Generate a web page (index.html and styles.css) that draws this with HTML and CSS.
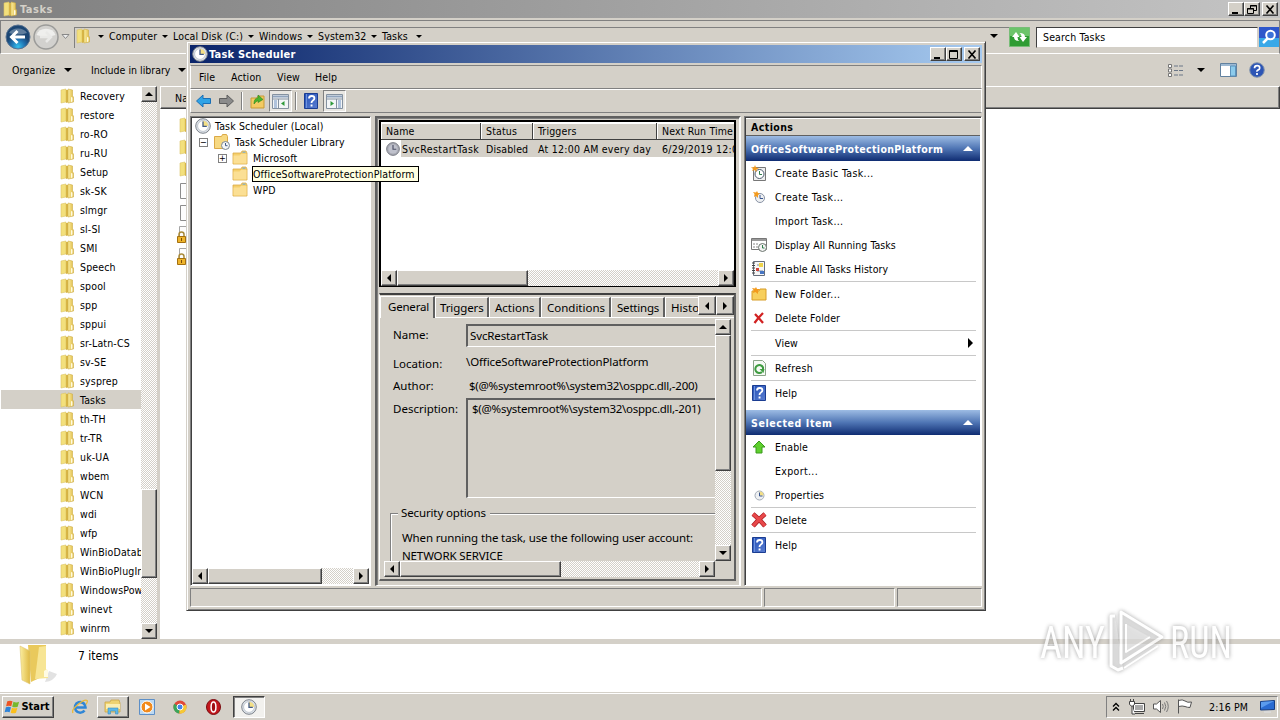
FILE: index.html
```html
<!DOCTYPE html>
<html lang="en">
<head>
    <meta charset="UTF-8">
    <meta name="viewport" content="width=device-width, initial-scale=1.0">
    <title>Task Scheduler</title>
    <link rel="stylesheet" href="styles.css">
</head>
<body>
    <!-- Icon definitions -->
    <svg class="defs" width="0" height="0">
        <defs>
            <linearGradient id="gold" x1="0" x2="1"><stop offset="0" stop-color="#fbeea0"/><stop offset="1" stop-color="#dfb944"/></linearGradient>
            <linearGradient id="helpblue" x1="0" x2="1" y2="1"><stop offset="0" stop-color="#2350b8"/><stop offset="1" stop-color="#5b7ed0"/></linearGradient>
            <radialGradient id="orb" cy="0.9"><stop offset="0" stop-color="#35c0ee"/><stop offset="0.6" stop-color="#1f6fae"/><stop offset="1" stop-color="#1b4673"/></radialGradient>
            <symbol id="folder" viewBox="0 0 16 16">
                <path d="M2 2l5-1v13l-5 1z" fill="#f3e07c" stroke="#dcc467" stroke-width=".6"/>
                <path d="M7 2h3v12l-3 1z" fill="#d8b545"/>
                <path d="M9 1l4.500 1v6l1 1v5l-5.500 1z" fill="url(#gold)" stroke="#cfae48" stroke-width=".6"/>
                <path d="M12 9l1.500.5v4l-1.500.5z" fill="#fffbe0"/>
            </symbol>
            <symbol id="folder-flat" viewBox="0 0 16 16">
                <path d="M1 3h8l1-2h4l1 2v11H1z" fill="#f5cf6c" stroke="#dba947" stroke-width=".8"/>
                <path d="M1.500 5.500h6l1.500-1.500h5.500v9.500h-13z" fill="#fbdf94"/>
                <path d="M10.500 2.200h3" stroke="#6aa9dc"/>
            </symbol>
            <symbol id="clock" viewBox="0 0 16 16">
                <circle cx="8" cy="8" r="7.300" fill="#dfe4ea" stroke="#7d838b"/>
                <circle cx="8" cy="8" r="5.400" fill="#fff" stroke="#aeb6c0" stroke-width=".7"/>
                <path d="M8 8V2.800A5.200 5.200 0 0 1 13.200 8z" fill="#f3df86"/>
                <path d="M8 3.500V8.300h3.800" fill="none" stroke="#425a86" stroke-width="1.300"/>
            </symbol>
            <symbol id="clock-gray" viewBox="0 0 16 16">
                <circle cx="8" cy="8" r="7.300" fill="#a9abb5" stroke="#70727d"/>
                <circle cx="8" cy="8" r="5.200" fill="#bfc1cc"/>
                <path d="M8 3.500V8.300h3.800" fill="none" stroke="#4c4f66" stroke-width="1.300"/>
            </symbol>
            <symbol id="help" viewBox="0 0 14 16">
                <path d="M.5.500h13v15H.5z" fill="url(#helpblue)" stroke="#1b3d92"/>
                <path d="M2.500 1v14" stroke="#6d92dd"/>
                <path d="M5 5.500q0-2.500 2.700-2.500t2.700 2.300q0 1.300-1.500 2.200T7.500 10" fill="none" stroke="#fff" stroke-width="1.800"/>
                <path d="M6.600 11.500h1.900v2H6.600z" fill="#fff"/>
            </symbol>
            <symbol id="arrow" viewBox="0 0 16 14">
                <path d="M1 7l6.500-6v3.500H15v5H7.500V13z" stroke-width="1"/>
            </symbol>
            <symbol id="pane" viewBox="0 0 17 15">
                <path d="M.5.500h16v14H.5z" fill="#f3f5f7" stroke="#8491a0"/>
                <path d="M1 2.500h15" stroke="#8fa3bd" stroke-width="2"/>
                <path d="M1 5h15M6.500 5v9" stroke="#8491a0"/>
                <path d="M2 7h3M2 9h3M2 11h3M2 13h3" stroke="#6c8fc0"/>
                <path d="M12.500 7v5L9 9.500z" fill="#2f9a3a"/>
            </symbol>
            <symbol id="doc" viewBox="0 0 14 16">
                <path d="M1.500.500h9l3 3v12h-12z" fill="#fdfdfd" stroke="#8c8c8c"/>
            </symbol>
            <symbol id="lockdoc" viewBox="0 0 16 18">
                <path d="M3.500.500h12v15h-12z" fill="#fdfdfd" stroke="#a5a5a5"/>
                <path d="M3 11V8.500q0-2.500 2.500-2.500T8 8.500V11" fill="none" stroke="#a88a3a" stroke-width="1.500"/>
                <path d="M1.500 10.500h8v6h-8z" fill="#eeb42c" stroke="#a4700f"/>
                <path d="M5.500 12v3" stroke="#7c4d06"/>
            </symbol>
            <symbol id="flagwin" viewBox="0 0 18 16">
                <path d="M3.500 2q3-1.500 5.500 0L7.700 7.300q-2.600-1.300-5.500 0z" fill="#ee5423"/>
                <path d="M10 2.500q3 1.300 6 0l-1.500 5.200q-3 1.300-5.800 0z" fill="#77b82d"/>
                <path d="M2 8.300q2.700-1.300 5.400 0L6 13.600q-2.600-1.300-5.300 0z" fill="#2e83d8"/>
                <path d="M8.400 8.700q2.900 1.300 5.800 0l-1.500 5.300q-2.900 1.300-5.600 0z" fill="#fbbf1c"/>
            </symbol>
        </defs>
    </svg>

    <div class="explorer">
        <div class="title-bar title-inactive">
            <svg class="i16"><use href="#folder"/></svg>
            <span class="title-text">Tasks</span>
            <div class="win-buttons">
                <b class="btn"><svg width="10" height="9"><path d="M1 7h6v2H1z"/></svg></b>
                <b class="btn"><svg width="10" height="9"><path d="M3.500 3V.500h6v5H7M3 1h7M.5 3.500h6v5h-6zM0 4h7" fill="none" stroke="#000"/></svg></b>
                <b class="btn btn-close"><svg width="10" height="9"><path d="M1.500.500l7 8M8.500.500l-7 8" stroke="#000" stroke-width="1.600"/></svg></b>
            </div>
        </div>
        <div class="address-row">
            <svg class="orb" width="26" height="26" viewBox="0 0 26 26"><circle cx="13" cy="13" r="12" fill="url(#orb)" stroke="#5a7391"/><path d="M4 9a10 8 0 0 1 18 0q-9 3-18 0z" fill="#fff" opacity=".3"/><path d="M12.500 7L6.500 13l6 6M7 13h13" fill="none" stroke="#fff" stroke-width="3"/></svg>
            <svg class="orb2" width="26" height="26" viewBox="0 0 26 26"><circle cx="13" cy="13" r="12" fill="#d2d1ce" stroke="#9b9b99" stroke-width="1.500"/><path d="M3.500 11a10 9 0 0 1 19 0q-9 3-19 0z" fill="#efefed"/><path d="M13 8l5 5-5 5M7 13h11" fill="none" stroke="#e9e9e7" stroke-width="2.500"/></svg>
            <svg class="nav-drop" width="9" height="6"><path d="M1 .5h7L4.500 4.500z" fill="#eee" stroke="#888"/></svg>
            <div class="address">
                <svg class="i16"><use href="#folder"/></svg>
                <i class="down"></i><span class="crumb c1">Computer</span>
                <i class="down"></i><span class="crumb c2">Local Disk (C:)</span>
                <i class="down"></i><span class="crumb c3">Windows</span>
                <i class="down"></i><span class="crumb c4">System32</span>
                <i class="down"></i><span class="crumb c5">Tasks</span>
                <i class="down"></i>
                <i class="down address-end"></i>
            </div>
            <svg class="refresh" width="21" height="20" viewBox="0 0 21 20"><path d="M.5.500h20v19H.5z" fill="#2f9c33" stroke="#77bd77"/><path d="M1 1h19v8H1z" fill="#6cc46a"/><path d="M3 10l4-5 3.500 5H8.500q0 3 2 4Q5 14 5 10zM18 10l-4 5-3.500-5h2q0-3-2-4Q16 6 16 10z" fill="#fff"/></svg>
            <div class="search">Search Tasks</div>
            <svg class="search-btn" width="20" height="20" viewBox="0 0 20 20"><path d="M0 0h20v20H0z" fill="#2e57cb"/><path d="M0 11h20v9H0z" fill="#38a8e8"/><circle cx="11.500" cy="8" r="4.300" fill="#3b72d8" stroke="#fff" stroke-width="2"/><path d="M8.500 11.500L4 16" stroke="#fff" stroke-width="2.500"/></svg>
        </div>
        <div class="command-bar">
            <span class="organize">Organize</span><i class="down big"></i>
            <span class="include">Include in library</span><i class="down big"></i>
            <div class="command-icons">
                <svg width="16" height="13" viewBox="0 0 16 13"><path d="M.5.500h3v3h-3zM.5 5h3v3h-3zM.5 9.500h3v3h-3z" fill="#fff" stroke="#777"/><path d="M6 2h4M11 2h4M6 6.500h4M11 6.500h4M6 11h4M11 11h4" stroke="#6a7687"/></svg>
                <i class="down big"></i>
                <svg width="17" height="14" viewBox="0 0 17 14"><path d="M.5.500h16v13H.5z" fill="#fff" stroke="#61819f"/><path d="M1 2h15" stroke="#9db9d3" stroke-width="2"/><path d="M10.500 3h5v10h-5z" fill="#8ccbec" stroke="#5b93bd"/></svg>
                <svg width="16" height="16" viewBox="0 0 16 16"><circle cx="8" cy="8" r="7.300" fill="#2d55b5" stroke="#8496ae"/><path d="M5.500 6.300q0-2.600 2.600-2.600t2.600 2.200q0 1.400-1.500 2T8 9.800M8 11v2" fill="none" stroke="#fff" stroke-width="1.700"/></svg>
            </div>
        </div>
        <div class="explorer-body">
            <div class="nav-tree">
                <div class="nav-item"><svg class="i16"><use href="#folder"/></svg>Recovery</div>
                <div class="nav-item"><svg class="i16"><use href="#folder"/></svg>restore</div>
                <div class="nav-item"><svg class="i16"><use href="#folder"/></svg>ro-RO</div>
                <div class="nav-item"><svg class="i16"><use href="#folder"/></svg>ru-RU</div>
                <div class="nav-item"><svg class="i16"><use href="#folder"/></svg>Setup</div>
                <div class="nav-item"><svg class="i16"><use href="#folder"/></svg>sk-SK</div>
                <div class="nav-item"><svg class="i16"><use href="#folder"/></svg>slmgr</div>
                <div class="nav-item"><svg class="i16"><use href="#folder"/></svg>sl-SI</div>
                <div class="nav-item"><svg class="i16"><use href="#folder"/></svg>SMI</div>
                <div class="nav-item"><svg class="i16"><use href="#folder"/></svg>Speech</div>
                <div class="nav-item"><svg class="i16"><use href="#folder"/></svg>spool</div>
                <div class="nav-item"><svg class="i16"><use href="#folder"/></svg>spp</div>
                <div class="nav-item"><svg class="i16"><use href="#folder"/></svg>sppui</div>
                <div class="nav-item"><svg class="i16"><use href="#folder"/></svg>sr-Latn-CS</div>
                <div class="nav-item"><svg class="i16"><use href="#folder"/></svg>sv-SE</div>
                <div class="nav-item"><svg class="i16"><use href="#folder"/></svg>sysprep</div>
                <div class="nav-item selected"><svg class="i16"><use href="#folder"/></svg>Tasks</div>
                <div class="nav-item"><svg class="i16"><use href="#folder"/></svg>th-TH</div>
                <div class="nav-item"><svg class="i16"><use href="#folder"/></svg>tr-TR</div>
                <div class="nav-item"><svg class="i16"><use href="#folder"/></svg>uk-UA</div>
                <div class="nav-item"><svg class="i16"><use href="#folder"/></svg>wbem</div>
                <div class="nav-item"><svg class="i16"><use href="#folder"/></svg>WCN</div>
                <div class="nav-item"><svg class="i16"><use href="#folder"/></svg>wdi</div>
                <div class="nav-item"><svg class="i16"><use href="#folder"/></svg>wfp</div>
                <div class="nav-item"><svg class="i16"><use href="#folder"/></svg>WinBioDatab</div>
                <div class="nav-item"><svg class="i16"><use href="#folder"/></svg>WinBioPlugIn</div>
                <div class="nav-item"><svg class="i16"><use href="#folder"/></svg>WindowsPow</div>
                <div class="nav-item"><svg class="i16"><use href="#folder"/></svg>winevt</div>
                <div class="nav-item"><svg class="i16"><use href="#folder"/></svg>winrm</div>
            </div>
            <div class="vscroll nav-scroll">
                <b class="btn"><i class="up"></i></b>
                <div class="thumb"></div>
                <b class="btn"><i class="down"></i></b>
            </div>
            <div class="file-list">
                <div class="file-header">Name</div>
                <div class="files">
                    <svg class="i16"><use href="#folder"/></svg>
                    <svg class="i16"><use href="#folder"/></svg>
                    <svg class="i16"><use href="#folder"/></svg>
                    <svg class="i16"><use href="#doc"/></svg>
                    <svg class="i16"><use href="#doc"/></svg>
                    <svg class="lock"><use href="#lockdoc"/></svg>
                    <svg class="lock"><use href="#lockdoc"/></svg>
                </div>
            </div>
        </div>
        <div class="details">
            <svg width="42" height="44" viewBox="0 0 42 44"><path d="M26 38q9-1 12-8l-8-3z" fill="#e2e2e2"/><path d="M9 1h18v30l-15 7z" fill="#e9c95c"/><path d="M20 3l7-1v23l2 2v7l-13 1z" fill="#f7e594"/><path d="M1 2l10 5v33l-8-4z" fill="url(#gold)" stroke="#dfc673" stroke-width=".6"/><path d="M25 27l3-2 1 2v6h-4z" fill="#fffbe2"/></svg>
            <span>7 items</span>
        </div>
    </div>

    <div class="scheduler">
        <div class="title-bar title-active">
            <svg class="i16"><use href="#clock"/></svg>
            <span class="title-text">Task Scheduler</span>
            <div class="win-buttons">
                <b class="btn"><svg width="10" height="9"><path d="M1 7h6v2H1z"/></svg></b>
                <b class="btn"><svg width="10" height="9"><path d="M.5.500h8v8h-8zM0 1.500h9" fill="none" stroke="#000"/></svg></b>
                <b class="btn btn-close"><svg width="10" height="9"><path d="M1.500.500l7 8M8.500.500l-7 8" stroke="#000" stroke-width="1.600"/></svg></b>
            </div>
        </div>
        <div class="menu-bar">
            <span class="m-file">File</span><span class="m-action">Action</span><span class="m-view">View</span><span class="m-help">Help</span>
        </div>
        <div class="tool-bar">
            <svg class="tool-arrow" width="17" height="14" fill="#2fa3e6" stroke="#1b6fb5"><use href="#arrow"/></svg>
            <svg class="tool-arrow flip" width="17" height="14" fill="#8b8b8b" stroke="#5e5e5e"><use href="#arrow"/></svg>
            <i class="tool-sep"></i>
            <svg class="tool-up" width="16" height="16" viewBox="0 0 16 16"><path d="M1 5h6l1-2h6v12H1z" fill="#f3ca63" stroke="#c99b34"/><path d="M4 11q0-6 4-6V2l5 4.500-5 3V7.500Q6 8 4 11z" fill="#49b52d" stroke="#2b8420" stroke-width=".6"/></svg>
            <span class="tool-pressed"><svg width="17" height="15"><use href="#pane"/></svg></span>
            <i class="tool-sep"></i>
            <svg class="tool-help" width="14" height="16"><use href="#help"/></svg>
            <span class="tool-pressed"><svg class="flip" width="17" height="15"><use href="#pane"/></svg></span>
        </div>
        <div class="panes">
            <div class="tree-pane">
                <div class="tree">
                    <div class="tree-row lvl0"><svg class="i16"><use href="#clock"/></svg><span class="t-root">Task Scheduler (Local)</span></div>
                    <div class="tree-row lvl1"><i class="expander">−</i><svg class="i16" viewBox="0 0 16 16"><path d="M.5 2.500h7l1-2h4l1 2v12H.5z" fill="#f7d982" stroke="#dba947"/><circle cx="11.500" cy="11.500" r="4" fill="#f4f6f8" stroke="#7d8790"/><path d="M11.500 9v2.700h2" fill="none" stroke="#425a86"/></svg><span class="t-lib">Task Scheduler Library</span></div>
                    <div class="tree-row lvl2"><i class="expander">+</i><svg class="i16"><use href="#folder-flat"/></svg><span class="t-ms">Microsoft</span></div>
                    <div class="tree-row lvl2"><i class="expander none"></i><svg class="i16"><use href="#folder-flat"/></svg><span class="tooltip">OfficeSoftwareProtectionPlatform</span></div>
                    <div class="tree-row lvl2"><i class="expander none"></i><svg class="i16"><use href="#folder-flat"/></svg><span class="t-wpd">WPD</span></div>
                </div>
                <div class="hscroll tree-scroll">
                    <b class="btn"><i class="left"></i></b>
                    <div class="thumb"></div>
                    <b class="btn"><i class="right"></i></b>
                </div>
            </div>

            <div class="center-pane">
                <div class="task-list">
                    <div class="task-row task-head"><span>Name</span><span>Status</span><span>Triggers</span><span>Next Run Time</span></div>
                    <div class="task-row task-item"><span><svg class="i14"><use href="#clock-gray"/></svg><em>SvcRestartTask</em></span><span>Disabled</span><span class="trigger-text">At 12:00 AM every day</span><span class="trigger-text">6/29/2019 12:0</span></div>
                    <div class="hscroll list-scroll">
                        <b class="btn"><i class="left"></i></b>
                        <div class="thumb"></div>
                        <b class="btn"><i class="right"></i></b>
                    </div>
                </div>
                <div class="task-detail">
                    <div class="tabs">
                        <span class="tab tab-general">General</span>
                        <span class="tab tab-triggers">Triggers</span>
                        <span class="tab tab-actions">Actions</span>
                        <span class="tab tab-conditions">Conditions</span>
                        <span class="tab tab-settings">Settings</span>
                        <span class="tab tab-history">History</span>
                        <b class="btn"><i class="left"></i></b>
                        <b class="btn"><i class="right"></i></b>
                    </div>
                    <div class="tab-page">
                        <div class="form-wrap">
                            <div class="form">
                                <div class="field f-name"><label>Name:</label><span class="box">SvcRestartTask</span></div>
                                <div class="field f-location"><label>Location:</label><span class="value">\OfficeSoftwareProtectionPlatform</span></div>
                                <div class="field f-author"><label>Author:</label><span class="value">$(@%systemroot%\system32\osppc.dll,-200)</span></div>
                                <div class="field f-desc"><label>Description:</label><span class="box">$(@%systemroot%\system32\osppc.dll,-201)</span></div>
                                <div class="security">
                                    <div class="legend">Security options</div>
                                    <p class="s-when">When running the task, use the following user account:</p>
                                    <p class="s-net">NETWORK SERVICE</p>
                                </div>
                            </div>
                            <div class="vscroll form-vscroll">
                                <b class="btn"><i class="up"></i></b>
                                <div class="thumb"></div>
                                <b class="btn"><i class="down"></i></b>
                            </div>
                        </div>
                        <div class="hscroll form-hscroll">
                            <b class="btn"><i class="left"></i></b>
                            <div class="thumb"></div>
                            <b class="btn"><i class="right"></i></b>
                        </div>
                    </div>
                </div>
            </div>

            <div class="actions-pane">
                <div class="actions-title">Actions</div>
                <div class="actions-head"><span class="h-office">OfficeSoftwareProtectionPlatform</span><i class="up white"></i></div>
                <div class="action"><svg class="i16" viewBox="0 0 16 16"><path d="M2.500 2.500h12v13h-12z" fill="#eee" stroke="#777"/><circle cx="8.500" cy="9" r="4.500" fill="#fff" stroke="#4d5b6e"/><path d="M8.500 6v3.500H11" fill="none" stroke="#2e7d4a"/><path d="M0 2l3 .5L4 0l1 2.500 3 .5-2.500 1.500V7L3.500 5 1 6l1-2z" fill="#f39a1d"/></svg><span class="dots">Create Basic Task...</span></div>
                <div class="action"><svg class="i16" viewBox="0 0 16 16"><circle cx="9" cy="9" r="4.500" fill="#eef0f2" stroke="#8993a5"/><path d="M9 6v3.500h3" fill="none" stroke="#39558e"/><path d="M2 3l3 .5L6 2l1 2 2 .5L7 6v3L5 7 3 8l.5-3z" fill="#f39a1d"/></svg><span class="dots">Create Task...</span></div>
                <div class="action"><svg class="i16"></svg><span class="dots">Import Task...</span></div>
                <div class="action"><svg class="i16" viewBox="0 0 16 16"><path d="M.5 1.500h15v11H.5z" fill="#fff" stroke="#777"/><path d="M1 3h14" stroke="#999" stroke-width="2"/><path d="M2 7h5M2 10h5" stroke="#888" stroke-dasharray="2 1"/><circle cx="11.500" cy="10.500" r="4" fill="#f3f3f3" stroke="#6c756f"/><path d="M11.500 8v3h2" fill="none" stroke="#2e7d4a"/></svg><span class="tight">Display All Running Tasks</span></div>
                <div class="action"><svg class="i16" viewBox="0 0 16 16"><path d="M2.500.500h11v14h-11z" fill="#f6f6f6" stroke="#676f7c"/><path d="M1 2h3M1 4.500h3M1 7h3M1 9.500h3M1 12h3" stroke="#444"/><path d="M6 4h6M6 10h6" stroke="#7d8aa0"/><path d="M8 2h4v4H8z" fill="#eed34a"/><path d="M5 7h3v3H5z" fill="#d0443a"/><path d="M9 10h4v3H9z" fill="#4776c4"/></svg><span class="tight">Enable All Tasks History</span></div>
                <hr>
                <div class="action"><svg class="i16" viewBox="0 0 16 16"><path d="M1 5h7l1-2h6v11H1z" fill="#f7cf5d" stroke="#d89d28"/><path d="M1 2l3 .5L5 1l1 2h3L7 5v3L4.500 6 2 7l.5-3z" fill="#f39a1d"/></svg><span class="dots">New Folder...</span></div>
                <div class="action"><svg class="i16" viewBox="0 0 16 16"><path d="M4 4q3 3 8 9M12 3Q7 8 3.500 13" stroke="#d22222" stroke-width="2.300" fill="none"/></svg><span>Delete Folder</span></div>
                <hr>
                <div class="action"><svg class="i16"></svg><span>View</span><i class="right big"></i></div>
                <hr>
                <div class="action"><svg class="i16" viewBox="0 0 16 16"><path d="M2.500.500h9l3 3v12h-12z" fill="#f6faf5" stroke="#8aa489"/><path d="M11 12A4 4 0 1 1 12 7.500v2" fill="none" stroke="#3e9c40" stroke-width="2"/><path d="M8.500 9h5l-1 4z" fill="#3e9c40"/></svg><span class="dots">Refresh</span></div>
                <hr>
                <div class="action"><svg class="i16"><use href="#help"/></svg><span>Help</span></div>
                <div class="actions-head second"><span class="h-selected">Selected Item</span><i class="up white"></i></div>
                <div class="action"><svg class="i16" viewBox="0 0 16 16"><path d="M8 2l6 6h-3v6H5V8H2z" fill="#5fd02e" stroke="#3a9a1d"/></svg><span>Enable</span></div>
                <div class="action"><svg class="i16"></svg><span class="dots">Export...</span></div>
                <div class="action"><svg class="i16" viewBox="0 0 16 16"><circle cx="8.500" cy="8.500" r="4.500" fill="#eef0f2" stroke="#a3abb7"/><path d="M8.500 8.500V4.500a4 4 0 0 1 4 4z" fill="#f3df86"/><path d="M8.500 5.500V9h3" fill="none" stroke="#39558e"/></svg><span>Properties</span></div>
                <hr>
                <div class="action"><svg class="i16" viewBox="0 0 16 16"><path d="M2 2q5 4 12 12M14 2Q8 7 2 14" stroke="#a81c20" stroke-width="4.600" fill="none"/><path d="M2 2q5 4 12 12M14 2Q8 7 2 14" stroke="#e8484a" stroke-width="3.200" fill="none"/></svg><span>Delete</span></div>
                <hr>
                <div class="action"><svg class="i16"><use href="#help"/></svg><span>Help</span></div>
            </div>
        </div>
        <div class="status-bar"><span class="st-main"></span><span class="st-mid"></span><span class="st-end"></span></div>
    </div>

    <div class="taskbar">
        <div class="start btn"><svg width="17" height="16"><use href="#flagwin"/></svg><span>Start</span></div>
        <div class="launch">
            <svg width="16" height="16" viewBox="0 0 16 16"><path d="M12.500 11.500A5.300 5.300 0 1 1 13.500 8.500H4" fill="none" stroke="#2f86d6" stroke-width="2.600"/><path d="M1 14Q-1 11 6 5.500T15 1.500q1 1-1 4" fill="none" stroke="#e9b93a" stroke-width="1.300"/></svg>
        </div>
        <div class="task-btn btn"><svg width="18" height="16" viewBox="0 0 18 16"><path d="M1 3h5l1-2h8l1 3v9H1z" fill="#efd371" stroke="#c9a546" stroke-width=".8"/><path d="M2 5h14v5H2z" fill="#fbeeb1"/><path d="M4 15V9h10v6h-2.500v-3h-5v3z" fill="#5cb8e9" stroke="#3c8fc0" stroke-width=".6"/></svg></div>
        <div class="launch l-wmp">
            <svg width="16" height="16" viewBox="0 0 16 16"><path d="M.5.500h15v15H.5z" fill="#bcd9f2" stroke="#5d8fc7"/><circle cx="8" cy="8" r="6" fill="#f18a1c" stroke="#fff"/><path d="M6 4.500L11.500 8 6 11.500z" fill="#fff"/></svg>
        </div>
        <div class="launch l-chrome">
            <svg width="14" height="14" viewBox="0 0 14 14"><circle cx="7" cy="7" r="6.500" fill="#e0493a"/><path d="M7 7L1.200 3.800A6.500 6.500 0 0 0 6.300 13.500z" fill="#3ba55a"/><path d="M7 7l6-2.500A6.500 6.500 0 0 1 6.300 13.500z" fill="#f6c935"/><circle cx="7" cy="7" r="3" fill="#4284ea" stroke="#fff"/></svg>
        </div>
        <div class="launch l-opera">
            <svg width="15" height="16" viewBox="0 0 15 16"><ellipse cx="7.500" cy="8" rx="7" ry="7.500" fill="#c3161c" stroke="#7a0b10"/><ellipse cx="7.500" cy="8" rx="2.400" ry="5" fill="#a00d12" stroke="#fff" stroke-width="1.500"/></svg>
        </div>
        <div class="task-btn pressed"><svg class="i16"><use href="#clock"/></svg></div>
        <div class="tray">
            <svg width="8" height="10" viewBox="0 0 8 10"><path d="M1 4.500l3-3 3 3M1 8.500l3-3 3 3" fill="none" stroke="#000" stroke-width="1.300"/></svg>
            <svg class="y-net" width="16" height="16" viewBox="0 0 16 16"><path d="M4.500 4.500h11v8h-11z" fill="#a9a9a9" stroke="#444"/><path d="M5.500 5.500h9v6h-9z" fill="none" stroke="#fff"/><path d="M6 14.500h9" stroke="#444"/><path d="M.5 2.500h5v3l-2 1.500h-1L.5 5.500zM1.500 0v2M4.500 0v2M3 7v8h3" fill="#fff" stroke="#444"/></svg>
            <svg class="y-vol" width="16" height="15" viewBox="0 0 16 15"><path d="M.5 5h3L7.500 1.500v12L3.500 10h-3z" fill="#fff" stroke="#555"/><path d="M9.500 5q1.500 2.500 0 5M11.500 3.500q2.500 4 0 8M13.500 2q3.500 5.500 0 11" fill="none" stroke="#777"/></svg>
            <svg class="y-flag" width="16" height="15" viewBox="0 0 16 15"><path d="M1.500.500v14M1.500 1.500q4-1.500 6.500.5t6.500 1L13 8.500q-2.500 0-5-1t-6.500 0z" fill="#fff" stroke="#555"/></svg>
            <span class="clock-text">2:16 PM</span>
            <svg width="15" height="13" viewBox="0 0 15 13"><path d="M.5 1.500l14-1v9l-14 .5z" fill="#2a6bd2" stroke="#163d83"/><path d="M1 2l13-1L1 8z" fill="#5b9bee"/><path d="M4 12h7" stroke="#ddd" stroke-width="1.500"/></svg>
        </div>
    </div>

    <!-- Watermark -->
    <svg class="watermark" width="210" height="72" viewBox="0 0 210 72">
        <g fill="#e4e4e4" fill-opacity=".6" stroke="#fff" stroke-width="3" stroke-linejoin="round">
            <path d="M83 12h-4v50l7 4 5-2M89 8l41 25-41 26z"/>
            <path d="M94 20v28l24-15M92 64l34-22" stroke-width="2"/>
        </g>
        <g class="watermark-text">
            <text x="8" y="54" textLength="65" lengthAdjust="spacingAndGlyphs">ANY</text>
            <text x="138" y="54" textLength="62" lengthAdjust="spacingAndGlyphs">RUN</text>
        </g>
    </svg>
</body>
</html>
```

FILE: styles.css
```css
* {
    box-sizing: border-box;
}

body {
    margin: 0;
    width: 1280px;
    height: 720px;
    overflow: hidden;
    background-color: #fff;
    font-family: 'DejaVu Sans Condensed', 'DejaVu Sans', sans-serif;
    font-stretch: condensed;
    font-size: 10.5px;
    letter-spacing: 0.15px;
    line-height: 16px;
    color: #000;
    white-space: nowrap;
    display: flex;
    flex-direction: column;
}

svg {
    display: block;
    flex: none;
}

.defs {
    position: absolute;
}

.i16 {
    width: 16px;
    height: 16px;
}

.i14 {
    width: 14px;
    height: 14px;
}

/* Shared controls */
.btn {
    display: flex;
    align-items: center;
    justify-content: center;
    flex: none;
    width: 16px;
    height: 16px;
    background-color: #d4d0c8;
    border: 1px solid;
    border-color: #fff #404040 #404040 #fff;
    box-shadow: inset -1px -1px #808080;
}

.up, .down, .left, .right {
    width: 0;
    height: 0;
    flex: none;
    border: 4px solid transparent;
}

.up {
    border-top: 0;
    border-bottom-color: #000;
}

.down {
    border-width: 3px;
    border-bottom: 0;
    border-top-color: #000;
}

.down.big, .btn .down {
    border-width: 4px;
    border-bottom: 0;
}

.left {
    border-left: 0;
    border-right-color: #000;
}

.right {
    border-right: 0;
    border-left-color: #000;
}

.right.big {
    border-width: 5px;
    border-right: 0;
}

.up.white {
    border-width: 5px;
    border-top: 0;
    border-bottom-color: #fff;
}

.vscroll, .hscroll {
    display: flex;
    flex: none;
    background: repeating-conic-gradient(#fff 0 25%, #d4d0c8 0 50%) 0 0 / 2px 2px;
}

.vscroll {
    flex-direction: column;
    width: 16px;
}

.hscroll {
    height: 16px;
}

.hscroll .btn:last-child {
    margin-left: auto;
}

.vscroll .btn:last-child {
    margin-top: auto;
}

.thumb {
    background-color: #d4d0c8;
    border: 1px solid;
    border-color: #fff #404040 #404040 #fff;
    box-shadow: inset -1px -1px #808080;
}

.title-bar {
    display: flex;
    align-items: center;
    height: 18px;
    color: #fff;
    font-weight: bold;
    font-size: 11px;
    letter-spacing: 0.2px;
}

.title-text {
    margin-left: 1px;
    padding-top: 1px;
}

.title-inactive {
    padding-left: 2px;
    background: linear-gradient(90deg, #808080, #c4c4c4);
    color: #d4d0c8;
}

.title-inactive .title-text {
    margin-left: 2px;
    letter-spacing: 0.5px;
}

.title-active {
    padding-left: 2px;
    background: linear-gradient(90deg, #0a246a, #a6caf0);
}

.win-buttons {
    display: flex;
    margin-left: auto;
    margin-right: 2px;
}

.win-buttons .btn {
    height: 14px;
}

.btn-close {
    margin-left: 2px;
}

/* Explorer window */
.explorer {
    height: 692px;
    flex: none;
    display: flex;
    flex-direction: column;
    background-color: #d4d0c8;
}

.address-row {
    display: flex;
    align-items: center;
    height: 34px;
    margin-top: 2px;
    padding-left: 4px;
    border: 1px solid;
    border-color: #808080 #808080 #fff #808080;
}

.orb2 {
    margin-left: 2px;
}

.nav-drop {
    margin: 0 4px 0 2px;
}

.address {
    flex: 1;
    display: flex;
    align-items: center;
    height: 21px;
    padding-bottom: 3px;
    border-top: 1px solid #808080;
    border-left: 1px solid #808080;
}

.address .i16 {
    margin-right: 7px;
}

.crumb {
    margin: 0 6px 0 5px;
}

.c1 { width: 47px; }
.c2 { width: 69px; }
.c3 { width: 42px; }
.c4 { width: 47px; }
.c5 { width: 28px; }

.address .address-end {
    margin-left: auto;
    margin-right: 11px;
    border-width: 4px 4px 0;
}

.refresh {
    margin-right: 6px;
}

.search {
    width: 222px;
    height: 21px;
    line-height: 19px;
    padding-left: 6px;
    background-color: #fff;
    border: 1px solid;
    border-color: #404040 #d4d0c8 #d4d0c8 #404040;
}

.search-btn {
    margin-left: 1px;
}

.command-bar {
    display: flex;
    align-items: center;
    height: 32px;
    padding-left: 12px;
}

.organize { width: 52px; }
.include { width: 87px; margin-left: 19px; letter-spacing: 0; }

.command-icons {
    display: flex;
    align-items: center;
    margin-left: auto;
    margin-right: 15px;
}

.command-icons .down {
    margin: 0 15px 0 13px;
}

.command-icons svg:last-child {
    margin-left: 12px;
}

.explorer-body {
    display: flex;
    height: 553px;
    background-color: #fff;
}

.nav-tree {
    width: 141px;
    overflow: hidden;
}

.nav-item {
    display: flex;
    align-items: center;
    height: 19px;
    margin-left: 1px;
    padding-left: 58px;
    overflow: hidden;
}

.nav-item .i16 {
    margin-right: 5px;
}

.nav-item.selected {
    height: 19px;
    background-color: #d4d0c8;
}

.nav-scroll {
    width: 19px;
    border-right: 3px solid #d4d0c8;
}

.nav-scroll .thumb {
    height: 89px;
    margin-top: 387px;
}

.file-list {
    flex: 1;
}

.file-header {
    height: 23px;
    line-height: 22px;
    padding-left: 14px;
    background-color: #d4d0c8;
    border: 1px solid;
    border-color: #fff #404040 #404040 #fff;
    box-shadow: inset -1px -1px #808080;
}

.files {
    padding: 8px 0 0 18px;
    display: flex;
    flex-direction: column;
    gap: 6px;
}

.lock {
    width: 16px;
    height: 18px;
    margin-top: -1px;
    margin-bottom: -1px;
    margin-left: -2px;
}

.details {
    flex: 1;
    display: flex;
    padding: 0 0 0 19px;
    border-top: 5px solid #d4d0c8;
    background-color: #fff;
    font-size: 12px;
    letter-spacing: 0;
}

.details span {
    margin: 4px 0 0 17px;
}

/* Task Scheduler window */
.scheduler {
    position: absolute;
    left: 186px;
    top: 41px;
    width: 800px;
    height: 570px;
    padding: 3px;
    display: flex;
    flex-direction: column;
    background-color: #d4d0c8;
    border: 1px solid;
    border-color: #d4d0c8 #404040 #404040 #d4d0c8;
    box-shadow: inset 1px 1px #fff, inset -1px -1px #808080;
}

.menu-bar {
    display: flex;
    align-items: center;
    height: 24px;
    margin-top: 2px;
    padding-left: 8px;
    border: 1px solid;
    border-color: #808080 #fff #808080 #fff;
}

.m-file { width: 32px; }
.m-action { width: 46px; }
.m-view { width: 38px; }

.tool-bar {
    display: flex;
    align-items: center;
    height: 24px;
    padding-left: 4px;
    border: 1px solid;
    border-color: #fff #fff #808080 #fff;
}

.flip {
    transform: scaleX(-1);
}

.tool-arrow.flip {
    margin-left: 6px;
}

.tool-sep {
    width: 2px;
    height: 18px;
    margin-left: 6px;
    border-left: 1px solid #808080;
    border-right: 1px solid #fff;
}

.tool-up {
    margin: 0 3px 0 7px;
}

.tool-help {
    margin: 0 5px 0 7px;
}

.tool-pressed {
    display: flex;
    align-items: center;
    justify-content: center;
    width: 23px;
    height: 22px;
    background-color: #e9e7e3;
    border: 1px solid;
    border-color: #808080 #fff #fff #808080;
}

.tool-pressed + .tool-sep {
    margin-left: 3px;
}

.panes {
    display: flex;
    height: 470px;
    margin-top: 3px;
}

.tree-pane {
    display: flex;
    flex-direction: column;
    width: 181px;
    border: 1px solid;
    border-color: #808080 #fff #fff #808080;
    box-shadow: inset 1px 1px #404040;
    padding: 1px;
    background-color: #fff;
}

.tree {
    flex: 1;
}

.tree-row {
    display: flex;
    align-items: center;
    height: 16px;
    position: relative;
}

.lvl0 { padding-left: 3px; }
.lvl0 span { margin-left: 4px; }
.lvl1 { padding-left: 7px; }
.lvl1 .i16 { margin: 0 5px 0 6px; }
.lvl2 { padding-left: 26px; }
.lvl2 .i16 { margin: 0 5px 0 5px; }

.expander {
    width: 9px;
    height: 9px;
    border: 1px solid #808080;
    font-style: normal;
    font-size: 9px;
    line-height: 7px;
    letter-spacing: 0;
    text-align: center;
}

.expander.none {
    border: 0;
}

/* Full label of the clipped node, drawn over the splitter */
.tooltip {
    position: absolute;
    left: 60px;
    top: 0;
    z-index: 2;
    width: 167px;
    height: 16px;
    line-height: 14px;
    border: 1px solid #000;
    background-color: #ffffe1;
}

.tree-scroll .thumb {
    width: 114px;
}

.center-pane {
    display: flex;
    flex-direction: column;
    width: 366px;
    margin-left: 4px;
    padding: 2px 3px 4px 2px;
    border-style: solid;
    border-width: 2px 2px 1px 2px;
    border-color: #606060 #fff #fff #606060;
    box-shadow: inset 1px 1px #808080;
}

.task-list {
    display: flex;
    flex-direction: column;
    flex: none;
    width: 357px;
    height: 167px;
    padding: 1px 0 0 0;
    border: 2px solid #000;
    border-bottom-width: 1px;
    background-color: #fff;
    overflow: hidden;
}

.task-row {
    display: grid;
    grid-template-columns: 100px 52px 124px 77px;
    height: 17px;
    flex: none;
}

.task-row > span {
    overflow: hidden;
    padding-left: 5px;
}

.task-head > span {
    line-height: 17px;
    background-color: #d4d0c8;
    border-right: 1px solid #404040;
    border-bottom: 1px solid #404040;
    box-shadow: inset 1px 1px #fff;
}

.task-head > span:last-child {
    border-right: 0;
}

.task-item > span {
    background-color: #d4d0c8;
    line-height: 18px;
}

.task-item > span:first-child {
    display: flex;
    align-items: center;
    background-color: #fff;
}

.task-item em {
    flex: 1;
    margin-left: 1px;
    padding-left: 1px;
    font-style: normal;
    letter-spacing: 0.45px;
    background-color: #d4d0c8;
}

.task-item .trigger-text {
    letter-spacing: 0.25px;
}

.list-scroll {
    margin-top: auto;
}

.list-scroll .thumb {
    width: 131px;
}

.task-detail {
    display: flex;
    flex-direction: column;
    flex: 1;
    width: 357px;
    margin-top: 6px;
    border: 1px solid;
    border-width: 2px 2px 2px 1px;
    border-color: #404040 #606060 #606060 #fff;
    font-family: 'Noto Sans', 'Open Sans', sans-serif;
    font-stretch: normal;
    font-size: 11.5px;
    letter-spacing: -0.13px;
}

.tabs {
    display: flex;
    align-items: flex-end;
    height: 23px;
    border-bottom: 1px solid #fff;
    letter-spacing: 0;
}

.tab {
    height: 20px;
    line-height: 19px;
    padding-left: 4px;
    overflow: hidden;
    border-top: 1px solid #fff;
    border-left: 1px solid #fff;
    border-right: 2px solid #606060;
}

.tab-general {
    width: 55px;
    height: 22px;
    margin-bottom: -1px;
    padding-left: 7px;
    letter-spacing: -0.2px;
    background-color: #d4d0c8;
}

.tab-triggers { width: 54px; letter-spacing: -0.1px; }
.tab-actions { width: 52px; padding-left: 5px; }
.tab-conditions { width: 70px; padding-left: 5px; }
.tab-settings { width: 54px; padding-left: 5px; letter-spacing: -0.2px; }
.tab-history { flex: 1; border-right: 0; padding-left: 5px; }

.tabs .btn {
    width: 18px;
    height: 19px;
    align-self: flex-start;
    margin-top: 1px;
}

.tab-page {
    flex: 1;
    padding: 1px 3px 2px 4px;
    display: flex;
    flex-direction: column;
}

.form-wrap {
    display: flex;
    height: 242px;
}

.form {
    flex: 1;
    overflow: hidden;
    padding: 5px 0 0 9px;
}

.field {
    display: flex;
}

.field label {
    flex: none;
    width: 73px;
    letter-spacing: 0;
}

.value, .box {
    flex: 1;
}

.box {
    border: 1px solid;
    border-width: 2px 0 1px 2px;
    border-color: #606060 #fff #fff #606060;
    padding-left: 2px;
}

.f-name { height: 29px; }
.f-name label { padding-top: 3px; }
.f-name .box { height: 23px; line-height: 19px; }
.f-location { height: 24px; }
.f-location label { padding-top: 3px; }
.f-location .value { margin-top: 1px; }
.f-author { height: 21px; }
.f-author label { padding-top: 1px; }
.f-author .value { padding: 1px 0 0 3px; letter-spacing: -0.25px; }
.f-desc { height: 106px; }
.f-desc label { padding-top: 3px; }
.f-desc .box { height: 100px; padding-left: 4px; line-height: 18px; letter-spacing: -0.25px; }

.security {
    margin: 9px 0 0 -3px;
    height: 80px;
    border-left: 1px solid #808080;
    border-top: 1px solid #808080;
    box-shadow: inset 1px 1px #fff;
    padding-left: 11px;
}

.legend {
    width: fit-content;
    height: 16px;
    margin: -9px 0 0 -4px;
    padding: 0 4px 0 3px;
    background-color: #d4d0c8;
}

.security p {
    margin: 0;
}

.s-when {
    padding-top: 9px;
    height: 27px;
}

.form-vscroll .thumb {
    height: 136px;
}

.form-hscroll {
    margin-right: 16px;
}

.form-hscroll .thumb {
    width: 161px;
}

.actions-pane {
    width: 238px;
    margin-left: 3px;
    border: 1px solid;
    border-color: #808080 #fff #fff #808080;
    box-shadow: inset 1px 1px #404040;
    padding: 2px 1px 1px 1px;
    background-color: #fff;
}

.actions-title {
    height: 17px;
    padding-left: 5px;
    background-color: #d4d0c8;
    border-bottom: 1px solid #606060;
    font-weight: bold;
    letter-spacing: 0.4px;
}

.actions-head {
    display: flex;
    align-items: center;
    justify-content: space-between;
    height: 25px;
    padding: 0 7px 0 5px;
    background: linear-gradient(#9dbce4, #4f75b4 50%, #0f2c72);
    color: #fff;
    font-weight: bold;
}

.h-office { letter-spacing: 0.34px; }
.h-selected { letter-spacing: 0.6px; }

.second {
    margin-top: 5px;
}

.action {
    display: flex;
    align-items: center;
    height: 24px;
    padding: 0 7px 0 5px;
}

.action span {
    margin-left: 8px;
}

.action .dots {
    letter-spacing: 0.35px;
}

.action .tight {
    letter-spacing: 0.06px;
}

.action .right {
    margin-left: auto;
}

.actions-pane hr {
    height: 1px;
    margin: 0 4px 0 5px;
    border: 0;
    background-color: #c8c8c8;
}

.status-bar {
    display: flex;
    gap: 2px;
    height: 19px;
    margin-top: 2px;
}

.status-bar span {
    border: 1px solid;
    border-color: #808080 #fff #fff #808080;
}

.st-main { width: 572px; }
.st-mid { width: 131px; }
.st-end { flex: 1; }

/* Taskbar */
.taskbar {
    display: flex;
    align-items: center;
    height: 28px;
    padding: 0 2px;
    background-color: #d4d0c8;
    border-top: 1px solid #d4d0c8;
    box-shadow: inset 0 1px #fff;
}

.start {
    width: 52px;
    height: 22px;
    padding-right: 2px;
    font-weight: bold;
    font-size: 11px;
    letter-spacing: 0;
}

.launch {
    margin-left: 18px;
}

.task-btn {
    display: flex;
    align-items: center;
    justify-content: center;
    width: 32px;
    height: 22px;
    margin-left: 9px;
}

.l-wmp { margin-left: 10px; }
.l-opera { margin-left: 19px; }

.pressed {
    margin-left: 12px;
    border: 1px solid;
    border-color: #404040 #fff #fff #404040;
    box-shadow: inset 1px 1px #808080;
    background-color: #f2f1ee;
}

.tray {
    display: flex;
    align-items: center;
    width: 172px;
    height: 22px;
    margin-left: auto;
    padding: 0 1px 0 5px;
    border: 1px solid;
    border-color: #808080 #fff #fff #808080;
}

.y-net { margin-left: 9px; }
.y-vol { margin-left: 8px; }
.y-flag { margin-left: 8px; }

.clock-text {
    margin-left: 16px;
    width: 51px;
}

.watermark {
    position: absolute;
    left: 1032px;
    top: 604px;
    z-index: 5;
    opacity: 0.8;
    filter: drop-shadow(0 0 2px #888);
}

.watermark-text {
    font-family: Roboto, sans-serif;
    font-size: 45px;
    letter-spacing: 0;
    fill: #fff;
}
```
